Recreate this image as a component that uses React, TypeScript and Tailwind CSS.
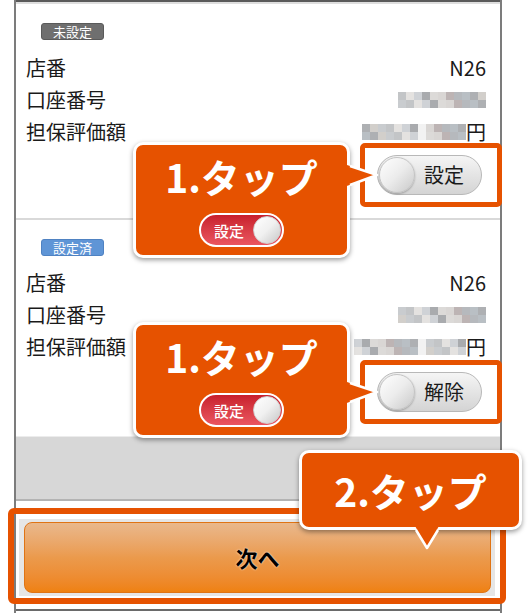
import React from "react";

const FONT = "font-['Noto_Sans_CJK_JP','Noto_Sans',sans-serif]";

const PIXELS = [
  "bg-[#d9d6d4]",
  "bg-[#c3c5c7]",
  "bg-[#b6b9bd]",
  "bg-[#cfd2d6]",
  "bg-[#aeb0b3]",
  "bg-[#dcdad8]",
  "bg-[#c9cccf]",
  "bg-[#bdb4b4]",
  "bg-[#e4e2e0]",
  "bg-[#b9bfc4]",
  "bg-[#a9abae]",
  "bg-[#d2cfcb]",
];

function Mosaic({ cols, rows, gap, seed }: { cols: number; rows: number; gap?: number; seed: number }) {
  return (
    <div className="flex flex-col">
      {Array.from({ length: rows }).map((_, r) => (
        <div key={r} className="flex">
          {Array.from({ length: cols }).map((_, c) => (
            <div
              key={c}
              className={`h-[8px] w-[8px] ${
                c === gap ? "bg-[#f2f2f2]" : PIXELS[(c * 7 + r * 5 + seed) % PIXELS.length]
              }`}
            />
          ))}
        </div>
      ))}
    </div>
  );
}

function Row({ label, children }: { label: string; children: React.ReactNode }) {
  return (
    <div className="flex h-[32px] items-center justify-between pl-[10px] pr-[14px] text-[20px] text-[#1a1a1a]">
      <span>{label}</span>
      {children}
    </div>
  );
}

function Toggle({ label }: { label: string }) {
  return (
    <div className="relative">
      {/* highlight frame */}
      <div className="absolute -left-[17px] -top-[12px] h-[64px] w-[142px] rounded-[5px] border-[5px] border-[#e65200]" />
      <div className="relative flex h-[40px] w-[105px] items-center rounded-full border border-[#b8b8b8] bg-gradient-to-b from-[#f5f5f5] to-[#d4d4d4] pl-[1px]">
        <div className="h-[36px] w-[36px] rounded-full border border-[#c4c4c4] bg-gradient-to-br from-[#ffffff] via-[#ececec] to-[#c9c9c9] shadow-[0_1px_2px_rgba(0,0,0,0.25)]" />
        <span className="ml-[9px] text-[20px] leading-none text-[#1a1a1a]">{label}</span>
      </div>
    </div>
  );
}

function MiniToggle() {
  return (
    <div className="flex h-[34px] w-[85px] items-center justify-between rounded-full border-2 border-white bg-gradient-to-b from-[#c81e2c] to-[#ea5560] pl-[13px] pr-[1px]">
      <span className="text-[15px] font-medium leading-none text-white">設定</span>
      <div className="h-[28px] w-[28px] rounded-full border border-[#d0d0d0] bg-gradient-to-br from-[#ffffff] via-[#f0f0f0] to-[#c8c8c8]" />
    </div>
  );
}

function Bubble({ className, pointerTop }: { className: string; pointerTop: string }) {
  return (
    <div className={`absolute h-[116px] w-[217px] ${className}`}>
      <div className="flex h-full w-full flex-col items-center rounded-[10px] border-[3px] border-white bg-[#e65200] pt-[12px] shadow-[0_2px_5px_rgba(0,0,0,0.4)]">
        <span className="text-[39px] font-bold leading-[38px] text-white">1.タップ</span>
        <div className="mt-[18px]">
          <MiniToggle />
        </div>
      </div>
      <svg className={`absolute left-[211px] ${pointerTop}`} width="36" height="34" viewBox="0 0 36 34">
        <polygon points="0,5 33,16 0,28" fill="#e65200" />
        <polyline points="6,7 33,16 6,26" fill="none" stroke="white" strokeWidth="2.5" strokeLinejoin="round" />
      </svg>
    </div>
  );
}

export default function App() {
  return (
    <div className={`relative h-[613px] w-[528px] overflow-hidden bg-white ${FONT}`}>
      <div className="ml-[14px] w-[488px] border-x-2 border-[#7c7c7c]">
        <div className="h-[2px] bg-[#5a5a5a]" />
        <div className="h-[2px] bg-[#dedede]" />

        {/* section 1 */}
        <div className="pb-[23px] pt-[19px]">
          <div className="ml-[25px] flex h-[17px] w-[63px] items-center justify-center rounded-[3px] border border-[#5a5a5a] bg-[#6f6f6f] text-[13px] leading-none text-white">
            未設定
          </div>
          <div className="mt-[12px]">
            <Row label="店番">
              <span>N26</span>
            </Row>
            <Row label="口座番号">
              <Mosaic cols={11} rows={2} seed={1} />
            </Row>
            <Row label="担保評価額">
              <div className="flex items-center">
                <Mosaic cols={13} rows={2} gap={7} seed={4} />
                <span>円</span>
              </div>
            </Row>
          </div>
          <div className="mt-[7px] flex justify-end pr-[18px]">
            <Toggle label="設定" />
          </div>
        </div>

        <div className="h-[2px] bg-[#d9d9d9]" />

        {/* section 2 */}
        <div className="pb-[23px] pt-[19px]">
          <div className="ml-[25px] flex h-[17px] w-[63px] items-center justify-center rounded-[3px] border border-[#4f82c2] bg-[#5f95d6] text-[13px] leading-none text-white">
            設定済
          </div>
          <div className="mt-[11px]">
            <Row label="店番">
              <span>N26</span>
            </Row>
            <Row label="口座番号">
              <Mosaic cols={11} rows={2} seed={6} />
            </Row>
            <Row label="担保評価額">
              <div className="flex items-center">
                <Mosaic cols={14} rows={2} gap={8} seed={3} />
                <span>円</span>
              </div>
            </Row>
          </div>
          <div className="mt-[9px] flex justify-end pr-[18px]">
            <Toggle label="解除" />
          </div>
        </div>

        {/* footer */}
        <div className="mt-[1px] h-[65px] border-b-2 border-t border-b-[#b3b3b3] border-t-[#ececec] bg-[#d7d7d7]" />

        {/* next button */}
        <div className="pb-[13px] pl-[3px] pr-[5px] pt-[18px]">
          <div className="bg-[#e6e6e6] pb-[3px] pl-[5px] pr-[4px] pt-[3px]">
            <button className="flex h-[71px] w-full items-center justify-center rounded-[8px] border border-[#e07414] bg-gradient-to-b from-[#e9b88c] via-[#eb9a4c] to-[#ef810f] text-[22px] font-bold text-black [text-shadow:0_0_2px_white]">
              次へ
            </button>
          </div>
        </div>
        <div className="h-[2px] bg-[#6a6a6a]" />
        <div className="h-[4px]" />
      </div>

      {/* button highlight frame */}
      <div className="absolute left-[8px] top-[508px] h-[96px] w-[498px] rounded-[6px] border-[6px] border-[#e65200]" />

      {/* callouts */}
      <Bubble className="left-[133px] top-[142px]" pointerTop="top-[17px]" />
      <Bubble className="left-[133px] top-[322px]" pointerTop="top-[54px]" />

      <div className="absolute left-[299px] top-[450px] h-[80px] w-[223px]">
        <div className="flex h-full w-full items-center justify-center rounded-[10px] border-[3px] border-white bg-[#e65200] shadow-[0_2px_5px_rgba(0,0,0,0.4)]">
          <span className="text-[39px] font-bold leading-none text-white">2.タップ</span>
        </div>
        <svg className="absolute left-[113px] top-[74px]" width="30" height="26" viewBox="0 0 30 26">
          <polygon points="2,0 15,24 28,0" fill="#e65200" />
          <polyline points="4,6 15,24 26,6" fill="none" stroke="white" strokeWidth="2.5" strokeLinejoin="round" />
        </svg>
      </div>
    </div>
  );
}
